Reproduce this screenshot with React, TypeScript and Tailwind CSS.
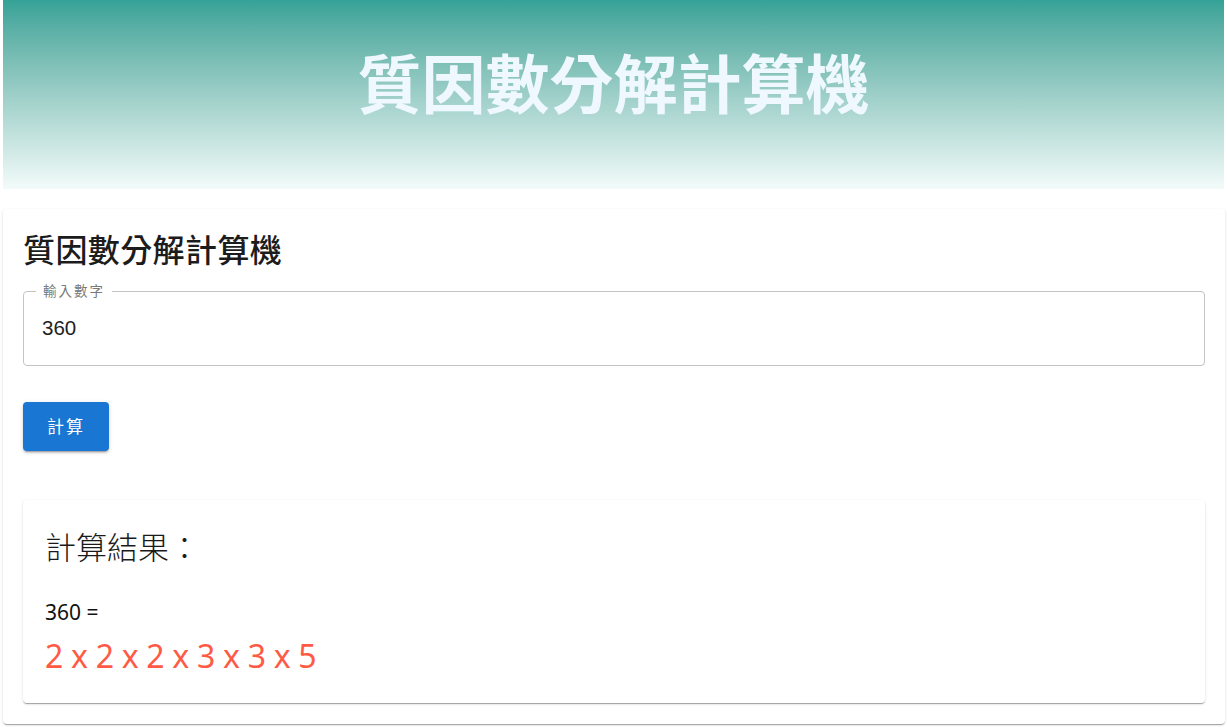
export default function App() {
  const n = 360;
  const factors = [2, 2, 2, 3, 3, 5];
  const cjk = { fontFamily: '"Noto Sans", "Noto Sans CJK TC", sans-serif' };

  return (
    <div className="min-h-[727px] bg-white pl-[3px] pr-[2px]" style={cjk}>
      <header className="mr-px flex h-[189px] items-center justify-center bg-gradient-to-b from-[#35a297] to-[#f3fbfa]">
        <h1 className="pb-[22px] text-[64px] font-bold leading-none text-[#f0f8ff]">質因數分解計算機</h1>
      </header>

      <div className="mt-[20px] rounded-[4px] bg-white px-5 pb-[21px] pt-[20px] shadow-[0_2px_1px_-1px_rgba(0,0,0,0.2),0_1px_1px_0_rgba(0,0,0,0.14),0_1px_3px_0_rgba(0,0,0,0.12)]">
        <h2 className="h-[42px] text-[32px] font-medium leading-[42px] tracking-[0.4px] text-[#1c1c1c]">質因數分解計算機</h2>

        <div className="relative mt-[20px] flex h-[75px] items-center rounded-[4px] border border-[#c4c4c4] px-[18px]">
          <span className="absolute -top-[10px] left-[12px] bg-white px-[7px] text-[13.5px] leading-[18px] tracking-[2px] text-[#7a7a7a]">
            輸入數字
          </span>
          <span className="text-[20.5px] text-[#222]" style={{ fontFamily: '"Liberation Sans", "Noto Sans CJK TC", sans-serif' }}>
            {n}
          </span>
        </div>

        <button className="mt-[36px] flex h-[49px] w-[86px] items-center justify-center rounded-[4px] bg-[#1976d2] text-[17px] tracking-[2px] text-white shadow-[0_3px_1px_-2px_rgba(0,0,0,0.2),0_2px_2px_0_rgba(0,0,0,0.14),0_1px_5px_0_rgba(0,0,0,0.12)]">
          計算
        </button>

        <div className="mt-[49px] h-[203px] rounded-[4px] bg-white px-[22px] pt-[24px] shadow-[0_2px_1px_-1px_rgba(0,0,0,0.2),0_1px_1px_0_rgba(0,0,0,0.14),0_1px_3px_0_rgba(0,0,0,0.12)]">
          <div className="text-[31px] font-light leading-[46px] text-[#1a1a1a]">計算結果：</div>
          <div className="mt-[28px] text-[21px] leading-[28px] text-[#111]">{n} =</div>
          <div className="mt-[8px] text-[32px] leading-[44px] tracking-[-0.3px] text-[#ff5a45]">{factors.join(" x ")}</div>
        </div>
      </div>
    </div>
  );
}
